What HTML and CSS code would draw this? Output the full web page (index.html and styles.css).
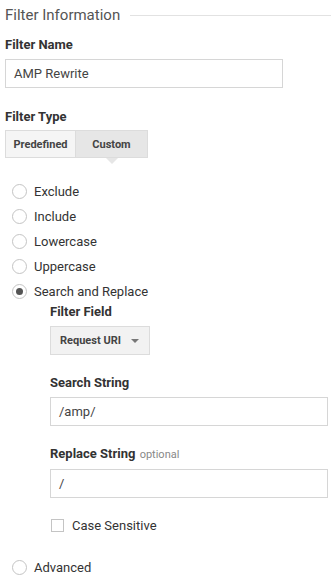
FILE: index.html
```html
<!DOCTYPE html>
<html lang="en">
    <head>
        <title>Filter Information</title>
        <link rel="stylesheet" href="styles.css">
    </head>
    <body>
        <div class="section-title">
            <span>Filter Information</span>
            <span class="rule"></span>
        </div>

        <div class="field-label first">Filter Name</div>
        <div class="text-input wide-name">AMP Rewrite</div>

        <div class="field-label type-label">Filter Type</div>
        <div class="toggle-group">
            <span class="toggle">Predefined</span>
            <span class="toggle selected">Custom</span>
        </div>

        <div class="radio-list">
            <div class="radio-row"><span class="radio"></span>Exclude</div>
            <div class="radio-row"><span class="radio"></span>Include</div>
            <div class="radio-row"><span class="radio"></span>Lowercase</div>
            <div class="radio-row"><span class="radio"></span>Uppercase</div>
            <div class="radio-row"><span class="radio checked"></span>Search and Replace</div>

            <div class="nested">
                <div class="field-label">Filter Field</div>
                <div class="select-button">
                    <span>Request URI</span>
                    <span class="arrow"></span>
                </div>

                <div class="field-label spaced">Search String</div>
                <div class="text-input">/amp/</div>

                <div class="field-label spaced">Replace String <span class="hint">optional</span></div>
                <div class="text-input">/</div>

                <div class="check-row"><span class="checkbox"></span>Case Sensitive</div>
            </div>

            <div class="radio-row advanced"><span class="radio"></span>Advanced</div>
        </div>
    </body>
</html>
```

FILE: styles.css
```css
body
{
    margin: 0;
    padding: 0 5px;
    font-family: Roboto, 'Liberation Sans', sans-serif;
    color: #333;
    background-color: white;
}

.section-title
{
    display: flex;
    align-items: center;
    height: 30px;
    font-size: 15px;
    color: #555;
}

.section-title .rule
{
    flex: 1;
    height: 1px;
    margin-left: 10px;
    margin-right: -5px;
    background-color: #e2e2e2;
}

.field-label
{
    font-size: 13px;
    font-weight: 700;
    line-height: 16px;
    color: #333;
    margin-bottom: 6px;
}

.field-label.first
{
    margin-top: 7px;
}

.field-label.type-label
{
    margin-top: 21px;
    margin-bottom: 5px;
}

.field-label.spaced
{
    margin-top: 20px;
}

.hint
{
    font-size: 11px;
    font-weight: 400;
    color: #888;
    margin-left: 1px;
}

.text-input
{
    box-sizing: border-box;
    height: 29px;
    width: 278px;
    border: 1px solid #d6d6d6;
    padding-left: 8px;
    display: flex;
    align-items: center;
    font-size: 13px;
    color: #444;
}

.toggle-group
{
    display: flex;
}

.toggle
{
    position: relative;
    box-sizing: border-box;
    height: 28px;
    display: flex;
    align-items: center;
    justify-content: center;
    border: 1px solid #dcdcdc;
    background-color: #f5f5f5;
    font-size: 11px;
    font-weight: 700;
    color: #444;
    width: 71px;
}

.toggle.selected
{
    width: 72px;
    border-left: none;
    background-color: #e6e6e6;
}

.toggle.selected:after
{
    content: "";
    position: absolute;
    top: 27px;
    left: 50%;
    margin-left: -6px;
    border-left: 6px solid transparent;
    border-right: 6px solid transparent;
    border-top: 6px solid #e6e6e6;
}

.radio-list
{
    margin-top: 21px;
}

.radio-row
{
    display: flex;
    align-items: center;
    height: 25px;
    font-size: 13px;
    color: #333;
}

.radio
{
    box-sizing: border-box;
    width: 15px;
    height: 15px;
    border: 1px solid #c4c4c4;
    border-radius: 50%;
    margin-left: 7px;
    margin-right: 7px;
    display: flex;
    align-items: center;
    justify-content: center;
}

.radio.checked:after
{
    content: "";
    width: 7px;
    height: 7px;
    border-radius: 50%;
    background-color: #555;
}

.nested
{
    padding-left: 45px;
}

.select-button
{
    box-sizing: border-box;
    width: 100px;
    height: 29px;
    display: flex;
    align-items: center;
    justify-content: space-between;
    padding: 0 10px 0 9px;
    border: 1px solid #dcdcdc;
    background-color: #f2f2f2;
    font-size: 11px;
    font-weight: 700;
    color: #444;
}

.arrow
{
    border-left: 4px solid transparent;
    border-right: 4px solid transparent;
    border-top: 4px solid #777;
}

.check-row
{
    display: flex;
    align-items: center;
    height: 20px;
    margin-top: 17px;
    font-size: 13px;
    color: #333;
}

.checkbox
{
    box-sizing: border-box;
    width: 13px;
    height: 13px;
    border: 1px solid #c4c4c4;
    margin-left: 1px;
    margin-right: 8px;
}

.radio-row.advanced
{
    margin-top: 20px;
}
```
